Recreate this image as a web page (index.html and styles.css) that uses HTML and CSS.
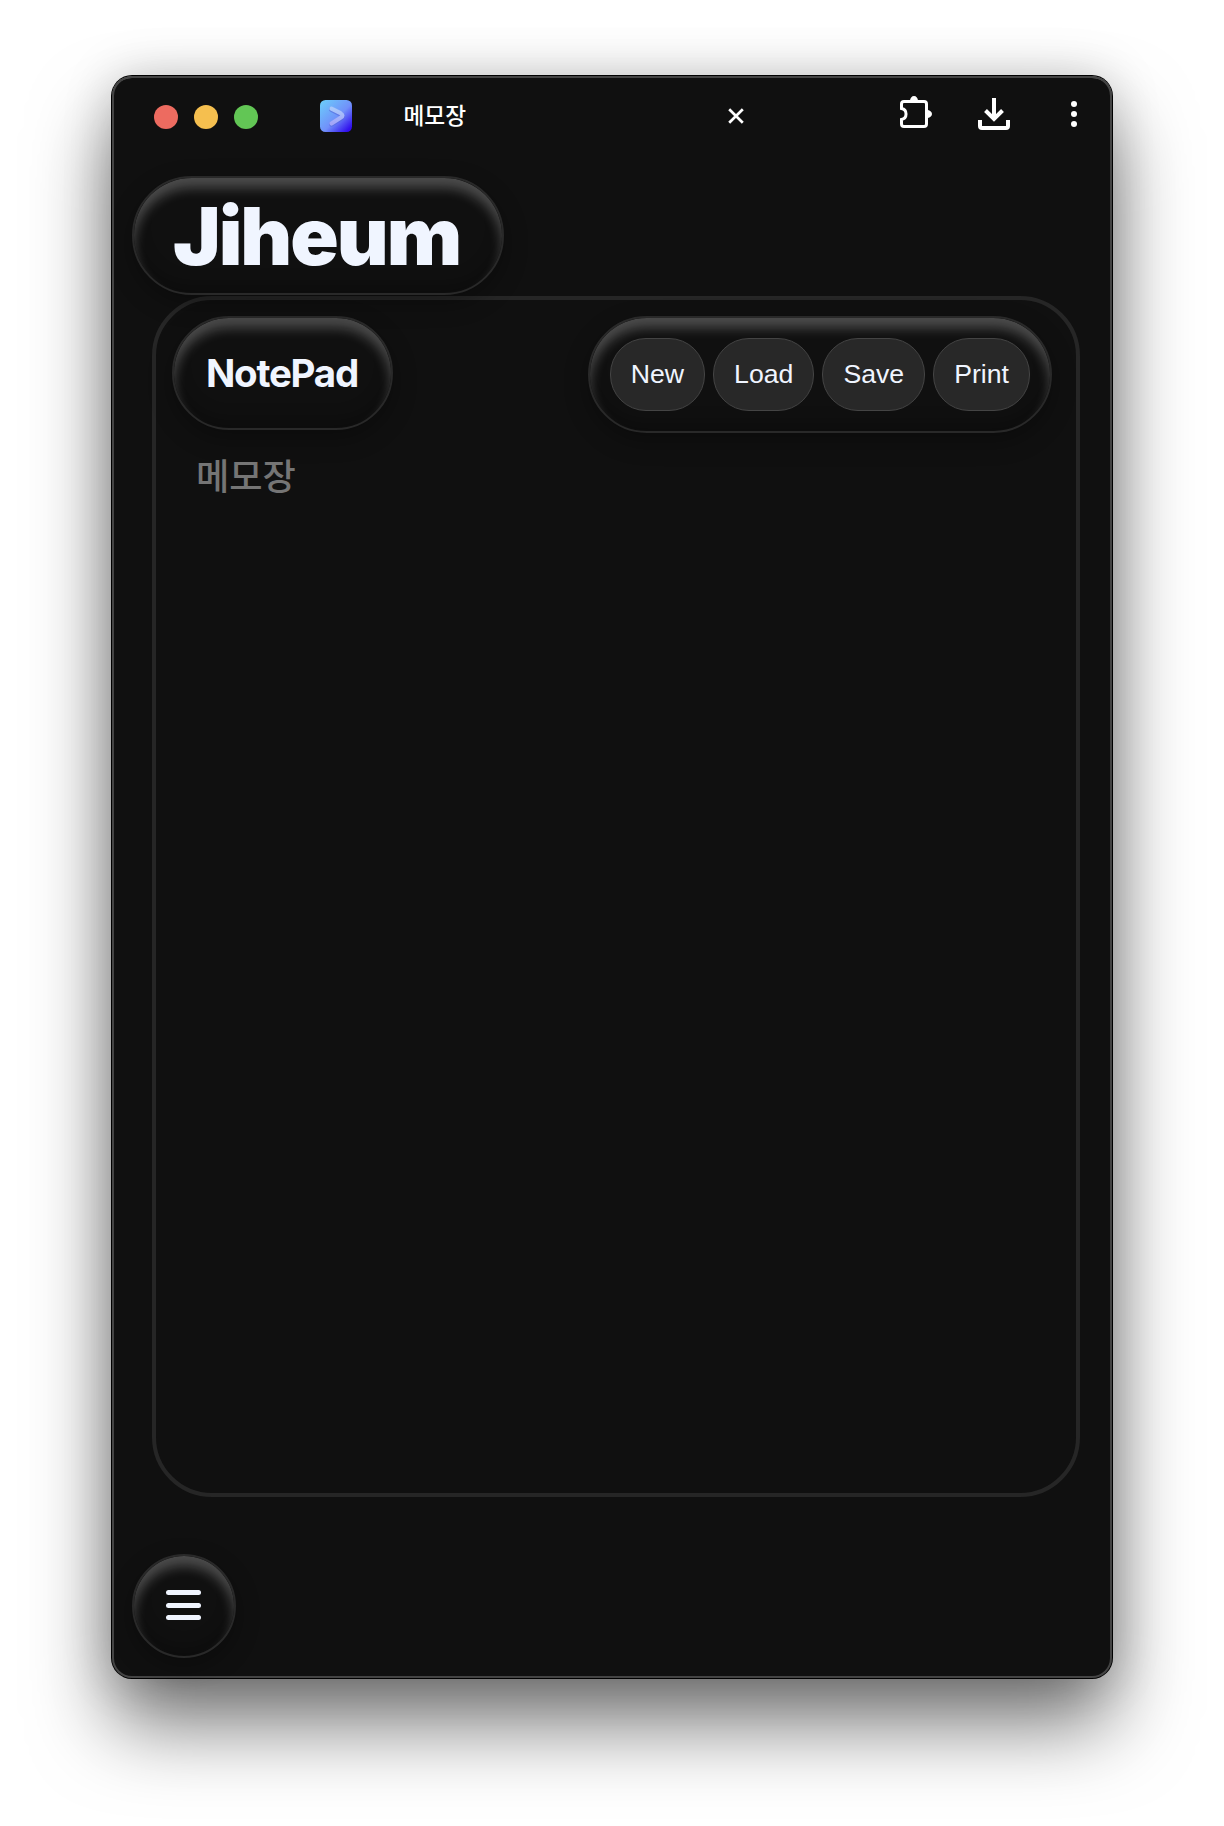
FILE: index.html
```html
<!DOCTYPE html>
<html lang="ko">
<head>
<meta charset="utf-8">
<title>메모장</title>
<link rel="stylesheet" href="styles.css">
</head>
<body>
<div class="window">
  <header class="titlebar">
    <div class="lights"><span class="light red"></span><span class="light yellow"></span><span class="light green"></span></div>
    <svg class="favicon" width="32" height="32" viewBox="0 0 32 32">
      <defs>
        <linearGradient id="fav" x1="0" y1="0" x2="1" y2="1"><stop offset="0" stop-color="#6bd0fb"/><stop offset=".55" stop-color="#7190fa"/><stop offset=".9" stop-color="#3212ee"/><stop offset="1" stop-color="#3000f0"/></linearGradient>
        <linearGradient id="arrow" x1="0" y1="0" x2="0" y2="1"><stop offset="0" stop-color="#a9c8fb"/><stop offset="1" stop-color="#a3a5f8"/></linearGradient>
      </defs>
      <rect width="32" height="32" rx="5.5" fill="url(#fav)"/>
      <path d="M11.5 9.5 20.5 14Q24.5 16.300 20.500 18.600L11.500 24.300" fill="none" stroke="#5368d8" stroke-opacity=".6" stroke-width="4.800" stroke-linecap="round"/>
      <path d="M11.500 8.700 20.500 13.200Q24.500 15.500 20.500 17.800L11.500 23.500" fill="none" stroke="url(#arrow)" stroke-width="4.200" stroke-linecap="round"/>
    </svg>
    <span class="tab-title">메모장</span>
    <svg class="close" width="16" height="16" viewBox="0 0 16 16"><path d="M1.200 1.200 14.800 14.800M14.800 1.200 1.200 14.800" stroke="#fff" stroke-width="2.700"/></svg>
    <svg class="puzzle" width="32" height="32" viewBox="0 0 32 32">
      <path d="M4 5.500H24Q26.500 5.500 26.500 8V28Q26.500 30.500 24 30.500H4Q1.500 30.500 1.500 28V23.500A5.600 5.600 0 0 0 1.500 12.500V8Q1.500 5.500 4 5.500Z" fill="none" stroke="#fff" stroke-width="3"/>
      <path d="M10 5a4 5 0 0 1 8 0ZM27 14a5 4 0 0 1 0 8Z" fill="#fff"/>
    </svg>
    <svg class="download" width="32" height="32" viewBox="0 0 32 32"><path d="M16 0V21M7.500 12.500 16 21 24.500 12.500M2 22V28Q2 30 4 30H28Q30 30 30 28V22" fill="none" stroke="#fff" stroke-width="4"/></svg>
    <svg class="more" width="6" height="26" viewBox="0 0 6 26" fill="#fff"><circle cx="3" cy="3" r="3"/><circle cx="3" cy="13" r="3"/><circle cx="3" cy="23" r="3"/></svg>
  </header>
  <h1 class="glass brand">Jiheum</h1>
  <main class="editor">
    <div class="toolbar">
      <h2 class="glass name">NotePad</h2>
      <nav class="glass actions">
        <button>New</button><button>Load</button><button>Save</button><button>Print</button>
      </nav>
    </div>
    <div class="placeholder">메모장</div>
  </main>
  <button class="glass menu" aria-label="Menu"><span></span><span></span><span></span></button>
</div>
</body>
</html>
```
FILE: styles.css
```css
* { box-sizing: border-box; }
body {
  margin: 0;
  padding: 76px 112px;
  height: 1826px;
  background: #fff;
  color: #f0f5ff;
  font-family: Inter, "Noto Sans CJK KR", sans-serif;
  overflow: hidden;
}
.window {
  width: 1000px;
  height: 1602px;
  padding: 0 20px;
  border-radius: 20px;
  background: #101010;
  display: flex;
  flex-direction: column;
  align-items: flex-start;
  box-shadow: inset 0 0 0 2px #444, inset 0 2px 0 #666, 0 0 0 1px #000, 0 0 50px rgba(0, 0, 0, .18), 0 46px 80px rgba(0, 0, 0, .54);
}
.titlebar {
  width: 100%;
  height: 100px;
  padding-left: 22px;
  display: flex;
  align-items: flex-start;
  color: #fff;
}
.lights { display: flex; gap: 16px; margin-top: 29px; }
.light { width: 24px; height: 24px; border-radius: 50%; }
.red { background: #ed6b60; }
.yellow { background: #f5bf4f; }
.green { background: #62c655; }
.favicon { margin: 24px 0 0 62px; }
.tab-title {
  width: 324px;
  padding-left: 51.500px;
  margin-top: 22px;
  font: 500 22.700px/34px "Noto Sans CJK KR", sans-serif;
}
.close { margin: 32px 0 0 52px; }
.puzzle { margin: 20px 0 0 156px; }
.download { margin: 22px 0 0 46px; }
.more { margin: 25px 0 0 61px; }
.glass {
  margin: 0;
  border: 2px solid #292929;
  border-radius: 60px;
  background: #101010;
  box-shadow: inset 0 10px 12px rgba(255, 255, 255, .25), inset 0 -8px 16px rgba(0, 0, 0, .25), 0 8px 24px rgba(0, 0, 0, .3);
}
.brand {
  position: relative;
  z-index: 1;
  width: 372px;
  height: 119px;
  padding-left: 39px;
  font-size: 80px;
  font-weight: 900;
  letter-spacing: -2px;
  line-height: 116px;
  white-space: nowrap;
}
.editor {
  width: 928px;
  height: 1201px;
  margin: 1px 0 57px 20px;
  padding: 16px 24px 0 16px;
  border: 4px solid #262626;
  border-radius: 60px;
}
.toolbar { display: flex; justify-content: space-between; align-items: flex-start; height: 117px; }
.name {
  width: 221px;
  height: 114px;
  padding-left: 32px;
  font-size: 38.500px;
  font-weight: 700;
  letter-spacing: -1.250px;
  line-height: 110px;
}
.actions { display: flex; gap: 8px; height: 117px; padding: 20px; }
.actions button {
  height: 73px;
  padding: 0 20px;
  border: 1px solid #444;
  border-radius: 36px;
  background: #282828;
  color: #f0f5ff;
  font: 26.667px "Liberation Sans", Arial, sans-serif;
}
.placeholder {
  padding: 14px 0 0 24px;
  color: #757575;
  font: 500 36.200px/54px "Noto Sans CJK KR", sans-serif;
}
.menu {
  width: 104px;
  height: 104px;
  padding: 0 1px 2px 0;
  display: flex;
  flex-direction: column;
  align-items: center;
  justify-content: center;
  gap: 7.500px;
}
.menu span { width: 35px; height: 5px; border-radius: 3px; background: #f0f5ff; }
```
